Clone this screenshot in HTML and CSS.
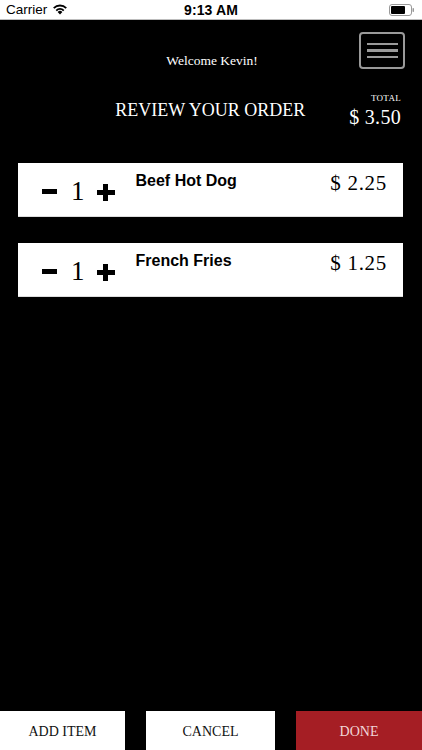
FILE: index.html
```html
<!DOCTYPE html>
<html lang="en">
<head>
<meta charset="utf-8">
<title>Review Your Order</title>
<link rel="stylesheet" href="styles.css">
</head>
<body>
<div class="app">
  <div class="statusbar">
    <div class="sb-left">
      <span class="carrier">Carrier</span>
      <svg class="wifi" width="16" height="12" viewBox="0 0 16 12">
        <path d="M8 11.5 L5.6 8.9 A3.4 3.4 0 0 1 10.4 8.9 Z" fill="#000"/>
        <path d="M3.6 6.9 A6.3 6.3 0 0 1 12.4 6.9 L11.1 8.2 A4.5 4.5 0 0 0 4.9 8.2 Z" fill="#000"/>
        <path d="M1.1 4.4 A9.8 9.8 0 0 1 14.9 4.4 L13.6 5.7 A8 8 0 0 0 2.4 5.7 Z" fill="#000"/>
      </svg>
    </div>
    <div class="sb-time">9:13 AM</div>
    <div class="sb-right">
      <svg width="26" height="12" viewBox="0 0 26 12">
        <rect x="0.5" y="0.5" width="22" height="11" rx="2.5" fill="none" stroke="#999" stroke-width="1"/>
        <rect x="2" y="2" width="14" height="8" rx="1" fill="#000"/>
        <rect x="23.5" y="4" width="1.5" height="4" rx="0.7" fill="#999"/>
      </svg>
    </div>
  </div>

  <header class="header">
    <div class="header-top">
      <div class="welcome">Welcome Kevin!</div>
      <button class="menu-btn" aria-label="Menu"><span></span><span></span><span></span></button>
    </div>
    <div class="header-bottom">
      <h1 class="title">REVIEW YOUR ORDER</h1>
      <div class="total">
        <div class="total-label">TOTAL</div>
        <div class="total-value">$ 3.50</div>
      </div>
    </div>
  </header>

  <main class="items">
    <div class="item">
      <div class="qty">
        <button class="qbtn minus" aria-label="Decrease"></button>
        <span class="qnum">1</span>
        <button class="qbtn plus" aria-label="Increase"></button>
      </div>
      <div class="name">Beef Hot Dog</div>
      <div class="price">$ 2.25</div>
    </div>
    <div class="item">
      <div class="qty">
        <button class="qbtn minus" aria-label="Decrease"></button>
        <span class="qnum">1</span>
        <button class="qbtn plus" aria-label="Increase"></button>
      </div>
      <div class="name">French Fries</div>
      <div class="price">$ 1.25</div>
    </div>
  </main>

  <footer class="footer">
    <button class="fbtn add">ADD ITEM</button>
    <button class="fbtn cancel">CANCEL</button>
    <button class="fbtn done">DONE</button>
  </footer>
</div>
</body>
</html>
```

FILE: styles.css
```css
* { box-sizing: border-box; }
html, body { margin: 0; padding: 0; background: #000; }
body { width: 422px; height: 750px; overflow: hidden; }
.app { display: flex; flex-direction: column; height: 750px; background: #000; }

.statusbar {
  height: 20px; background: #fff; border-bottom: 1px solid #bdbdbd;
  display: grid; grid-template-columns: 1fr auto 1fr; align-items: center;
  font-family: "Liberation Sans", Arial, sans-serif; color: #000;
}
.sb-left { display: flex; align-items: center; gap: 5px; padding-left: 6px; }
.carrier { font-size: 13.5px; }
.wifi { margin-top: -1px; }
.sb-time { font-size: 14px; font-weight: bold; letter-spacing: 0.1px; }
.sb-right { display: flex; justify-content: flex-end; padding-right: 7px; padding-top: 1px; }

.header { color: #fff; font-family: "Liberation Serif", "Times New Roman", serif; }
.header-top {
  display: grid; grid-template-columns: 1fr auto 1fr; align-items: start;
  padding-top: 12px; height: 50px;
}
.welcome { grid-column: 2; font-size: 13.5px; padding-top: 21px; margin-left: 2px; }
.menu-btn {
  grid-column: 3; justify-self: end; margin-right: 17px;
  width: 46px; height: 37px; border: 2.5px solid #9a9a9a; border-radius: 4px;
  background: #000; padding: 0; display: flex; flex-direction: column;
  justify-content: center; align-items: center; gap: 4px; cursor: pointer;
}
.menu-btn span { display: block; width: 31px; height: 2.5px; background: #9a9a9a; }

.header-bottom {
  display: flex; justify-content: flex-end; align-items: flex-start;
  padding-top: 23px; padding-right: 21px; height: 93px;
}
.title {
  margin: 7px 44px 0 0; font-weight: normal; font-size: 18px; letter-spacing: 0;
}
.total { text-align: right; }
.total-label { font-size: 9px; letter-spacing: 0.3px; line-height: 10px; }
.total-value { font-size: 20px; margin-top: 3px; letter-spacing: 0.3px; }

.items { display: flex; flex-direction: column; gap: 26px; padding: 0 19px 0 18px; }
.item {
  height: 54px; background: #fff; display: flex; align-items: flex-start;
  border-bottom: 1px solid #ddd;
}
.qty { display: flex; align-items: center; height: 54px; padding-left: 24px; padding-top: 2px; }
.qbtn { border: 0; padding: 0; background: transparent; position: relative; cursor: pointer; }
.minus { width: 15px; height: 5px; background: #000; margin-top: 0; }
.plus { width: 18px; height: 17px; margin-top: 3px; }
.plus::before, .plus::after { content: ""; position: absolute; background: #000; }
.plus::before { left: 0; top: 6px; width: 18px; height: 5px; }
.plus::after { left: 6.5px; top: 0; width: 5px; height: 17px; }
.qnum {
  font-family: "Liberation Serif", "Times New Roman", serif; font-size: 27px;
  color: #000; margin: 0 12px 0 14px; line-height: 1;
}
.name {
  font-family: "Liberation Sans", Arial, sans-serif; font-weight: bold; font-size: 16px;
  color: #000; margin-left: 21px; padding-top: 9px; flex: 1;
}
.price {
  font-family: "Liberation Serif", "Times New Roman", serif; font-size: 21px;
  color: #000; padding-top: 8px; padding-right: 16px; letter-spacing: 0.7px;
}

.footer { margin-top: auto; display: flex; gap: 21px; height: 39px; }
.fbtn {
  border: 0; margin: 0; height: 39px; padding: 0; padding-top: 2px;
  font-family: "Liberation Serif", "Times New Roman", serif; font-size: 14px;
  color: #111; background: #fff; cursor: pointer;
}
.add { width: 125px; }
.cancel { width: 129px; }
.done { flex: 1; background: #a51e24; color: #f1d6d7; }
```
